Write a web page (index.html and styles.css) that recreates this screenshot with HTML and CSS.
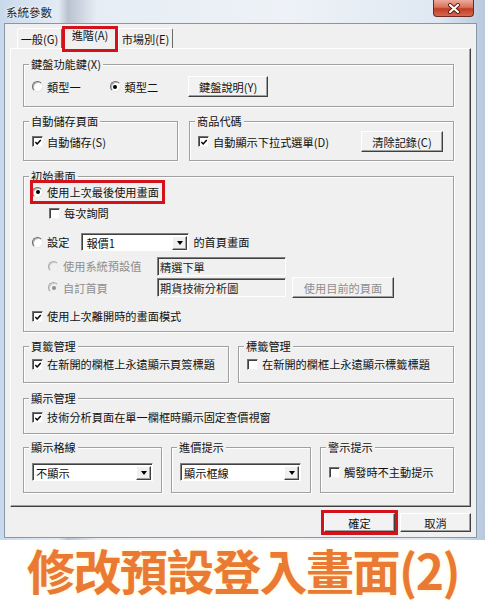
FILE: index.html
```html
<!DOCTYPE html>
<html lang="zh-Hant">
<head>
<meta charset="utf-8">
<title>系統參數</title>
<link rel="stylesheet" href="styles.css">
</head>
<body>
<div class="screen">
  <div class="window">
    <div class="titlebar">
      <span class="title">系統參數</span>
      <span class="close">
        <svg width="14" height="11" viewBox="0 0 14 11">
          <path d="M3 2 L11 9 M11 2 L3 9" stroke="#5a1a10" stroke-width="4" stroke-linecap="round"/>
          <path d="M3 2 L11 9 M11 2 L3 9" stroke="#fff" stroke-width="2.2" stroke-linecap="round"/>
        </svg>
      </span>
    </div>
    <div class="client">
      <div class="tabs">
        <div class="tab t1">一般(G)</div>
        <div class="tab sel hl">進階(A)</div>
        <div class="tab t3">市場別(E)</div>
      </div>
      <div class="panel">
        <div class="group g-key">
          <div class="legend">鍵盤功能鍵(X)</div>
          <div class="row r-key">
            <span class="opt"><span class="radio"></span>類型一</span>
            <span class="opt opt2"><span class="radio on"></span>類型二</span>
            <span class="btn btn-key">鍵盤說明(Y)</span>
          </div>
        </div>

        <div class="pair pair-save">
          <div class="group g-save">
            <div class="legend">自動儲存頁面</div>
            <div class="row r-save">
              <span class="opt"><span class="check on"><svg viewBox="0 0 9 9"><polyline points="1.5,4 3.6,6.2 7.6,1.8" fill="none" stroke="#000" stroke-width="1.7"/></svg></span>自動儲存(S)</span>
            </div>
          </div>
          <div class="group g-code">
            <div class="legend">商品代碼</div>
            <div class="row r-save">
              <span class="opt"><span class="check on"><svg viewBox="0 0 9 9"><polyline points="1.5,4 3.6,6.2 7.6,1.8" fill="none" stroke="#000" stroke-width="1.7"/></svg></span>自動顯示下拉式選單(D)</span>
              <span class="btn btn-clear">清除記錄(C)</span>
            </div>
          </div>
        </div>

        <div class="group g-init">
          <div class="legend">初始畫面</div>
          <div class="row r1 hl"><span class="opt"><span class="radio on"></span>使用上次最後使用畫面</span></div>
          <div class="row r2"><span class="opt"><span class="check"></span>每次詢問</span></div>
          <div class="row r3">
            <span class="opt"><span class="radio"></span>設定</span>
            <span class="select sel-home"><span class="sel-text">報價1</span><span class="arrow"></span></span>
            <span class="after-sel">的首頁畫面</span>
          </div>
          <div class="row r4">
            <span class="opt sub dis"><span class="radio"></span>使用系統預設值</span>
            <span class="textbox">精選下單</span>
          </div>
          <div class="row r5">
            <span class="opt sub dis"><span class="radio on"></span>自訂首頁</span>
            <span class="textbox">期貨技術分析圖</span>
            <span class="btn btn-cur dis">使用目前的頁面</span>
          </div>
          <div class="row r6">
            <span class="opt"><span class="check on"><svg viewBox="0 0 9 9"><polyline points="1.5,4 3.6,6.2 7.6,1.8" fill="none" stroke="#000" stroke-width="1.7"/></svg></span>使用上次離開時的畫面模式</span>
          </div>
        </div>

        <div class="pair pair-tab">
          <div class="group g-page">
            <div class="legend">頁籤管理</div>
            <div class="row r-one">
              <span class="opt"><span class="check on"><svg viewBox="0 0 9 9"><polyline points="1.5,4 3.6,6.2 7.6,1.8" fill="none" stroke="#000" stroke-width="1.7"/></svg></span>在新開的欄框上永遠顯示頁簽標題</span>
            </div>
          </div>
          <div class="group g-label">
            <div class="legend">標籤管理</div>
            <div class="row r-one">
              <span class="opt"><span class="check"></span>在新開的欄框上永遠顯示標籤標題</span>
            </div>
          </div>
        </div>

        <div class="group g-disp">
          <div class="legend">顯示管理</div>
          <div class="row r-disp">
            <span class="opt"><span class="check on"><svg viewBox="0 0 9 9"><polyline points="1.5,4 3.6,6.2 7.6,1.8" fill="none" stroke="#000" stroke-width="1.7"/></svg></span>技術分析頁面在單一欄框時顯示固定查價視窗</span>
          </div>
        </div>

        <div class="pair pair-three">
          <div class="group g-grid">
            <div class="legend">顯示格線</div>
            <div class="row r-last">
              <span class="select sel-wide"><span class="sel-text">不顯示</span><span class="arrow"></span></span>
            </div>
          </div>
          <div class="group g-price">
            <div class="legend">進價提示</div>
            <div class="row r-last">
              <span class="select sel-wide"><span class="sel-text">顯示框線</span><span class="arrow"></span></span>
            </div>
          </div>
          <div class="group g-alert">
            <div class="legend">警示提示</div>
            <div class="row r-last">
              <span class="opt"><span class="check"></span>觸發時不主動提示</span>
            </div>
          </div>
        </div>
      </div>
      <div class="footer">
        <span class="btn btn-foot hl ok">確定</span>
        <span class="btn btn-foot">取消</span>
      </div>
    </div>
  </div>
  <div class="caption">修改預設登入畫面(2)</div>
</div>
</body>
</html>
```

FILE: styles.css
```css
* { box-sizing: border-box; }

body {
  margin: 0;
  background: #fff;
  font-family: "Noto Sans CJK TC", "Noto Sans", sans-serif;
  font-size: 11.2px;
  line-height: 14px;
  color: #111;
}

.screen {
  width: 485px;
  background: #fff;
}

.window {
  height: 540px;
  padding: 0 8px 2px 4px;
  display: flex;
  flex-direction: column;
  background: linear-gradient(90deg, #c9d9ec 0%, #e3ebf4 12%, #b9c3cf 14%, #e6edf5 20%, #eef2f7 60%, #dfe8f2 90%, #b8c9de 100%);
}

.titlebar {
  height: 23px;
  flex: none;
  display: flex;
  justify-content: space-between;
  align-items: flex-start;
  padding-left: 2px;
}

.title {
  line-height: 24px;
  font-size: 11.5px;
  color: #1a1a1a;
  text-shadow: 0 0 4px #fff, 0 0 2px #fff;
}

.close {
  width: 41px;
  height: 17px;
  margin-right: 3px;
  border: 1px solid #6e2a1f;
  border-top: 0;
  border-radius: 0 0 4px 4px;
  background: linear-gradient(#ecaa9b 0%, #d9725c 45%, #c23c22 55%, #d46a4f 100%);
  display: flex;
  align-items: center;
  justify-content: center;
}

.client {
  height: 515px;
  flex: none;
  border: 1px solid #8797aa;
  background: #f0f0f0;
  padding: 2px 5px 0 5px;
}

/* tabs */
.tabs {
  display: flex;
  align-items: flex-end;
  height: 22px;
  padding-left: 7px;
}

.tab {
  height: 20px;
  border: 1px solid;
  border-bottom: 0;
  border-color: #fff #6a6a6a transparent #fff;
  border-radius: 2px 2px 0 0;
  text-align: center;
  padding-top: 2px;
  line-height: 16px;
  background: #f0f0f0;
}

.t1 { width: 45px; }
.t3 { width: 55px; }

.tab.sel {
  width: 56px;
  height: 23px;
  margin-bottom: -1px;
  padding-top: 0;
  z-index: 1;
}

/* red annotation boxes */
.hl { position: relative; }
.hl::after {
  content: "";
  position: absolute;
  border: 3px solid #d3121c;
  pointer-events: none;
}
.tab.hl::after { left: -1px; right: -1px; top: -1px; bottom: -3px; }
.r1.hl::after { left: -2px; right: -2px; top: -2px; bottom: -2px; }
.ok.hl::after { left: -4px; right: -4px; top: -4px; bottom: -4px; }

.panel {
  width: 461px;
  height: 459px;
  border: 1px solid;
  border-color: #fff #404040 #404040 #fff;
  box-shadow: inset -1px -1px 0 #a0a0a0;
  padding: 15px 0 0 12px;
  display: flex;
  flex-direction: column;
  gap: 14px;
}

/* group boxes */
.group {
  border: 1px solid #a0a0a0;
  box-shadow: inset 1px 1px 0 #fff, 1px 1px 0 #fff;
  padding: 0 10px 0 8px;
  flex: none;
}

.legend {
  width: max-content;
  margin: -8px 0 0 -3px;
  padding: 0 2px;
  background: #f0f0f0;
  line-height: 14px;
}

.row {
  display: flex;
  align-items: center;
  height: 20px;
  white-space: nowrap;
}

.pair { display: flex; flex: none; }

.g-key { width: 431px; height: 43px; }
.r-key { margin-top: 5px; height: 21px; }
.opt2 { margin-left: 29px; }
.btn-key { width: 80px; height: 21px; margin-left: 30px; }

.pair-save { gap: 11px; }
.g-save { width: 155px; height: 40px; }
.g-code { width: 265px; height: 40px; }
.r-save { margin-top: 3px; height: 21px; }
.btn-clear { width: 82px; height: 21px; margin-left: auto; }

.g-init { width: 431px; height: 156px; margin-top: 1px; }
.r1 { margin-top: -1px; width: max-content; padding-right: 4px; }
.r2 { margin-top: 1px; padding-left: 17px; }
.r3 { margin-top: 9px; }
.r4 { margin-top: 4px; padding-left: 16px; }
.r5 { margin-top: 1px; padding-left: 16px; height: 21px; }
.r6 { margin-top: 8px; }

.sel-home { width: 108px; margin-left: 12px; }
.after-sel { margin-left: 4px; }
.sub { width: 109px; }
.btn-cur { width: 102px; height: 21px; margin-left: 6px; }

.pair-tab { gap: 9px; }
.g-page { width: 206px; height: 37px; }
.g-label { width: 216px; height: 37px; }
.r-one { margin-top: 1px; }

.g-disp { width: 431px; height: 36px; margin-top: 1px; }
.r-disp { margin-top: 2px; }

.pair-three { gap: 9px; margin-top: -1px; }
.g-grid { width: 139px; height: 46px; }
.g-price { width: 140px; height: 46px; }
.g-alert { width: 134px; height: 46px; }
.r-last { margin-top: 9px; height: 18px; }
.sel-wide { width: 121px; }

/* controls */
.opt {
  display: flex;
  align-items: center;
  gap: 4px;
}

.radio {
  width: 11px;
  height: 11px;
  flex: none;
  border-radius: 50%;
  border: 1px solid;
  border-color: #6a6a6a #e6e6e6 #e6e6e6 #6a6a6a;
  background: #fff;
  box-shadow: inset 1px 1px 0 #b8b8b8;
  display: flex;
  align-items: center;
  justify-content: center;
}
.radio.on::after {
  content: "";
  width: 4px;
  height: 4px;
  border-radius: 50%;
  background: #000;
}

.check {
  width: 11px;
  height: 11px;
  flex: none;
  border: 1px solid;
  border-color: #707070 #f4f4f4 #f4f4f4 #707070;
  box-shadow: inset 1px 1px 0 #404040;
  background: #fff;
  padding: 1px 0 0 1px;
  display: flex;
}
.check svg { width: 9px; height: 9px; }

.dis { color: #8e8e8e; }
.dis .radio {
  border-color: #a8a8a8 #eeeeee #eeeeee #a8a8a8;
  box-shadow: inset 1px 1px 0 #d0d0d0;
  background: #f0f0f0;
}
.dis .radio.on::after { background: #8e8e8e; }

.btn {
  display: flex;
  align-items: center;
  justify-content: center;
  background: #f2f2f2;
  border: 1px solid;
  border-color: #fff #404040 #404040 #fff;
  box-shadow: inset -1px -1px 0 #a0a0a0;
  flex: none;
}

.select {
  height: 18px;
  display: flex;
  align-items: center;
  justify-content: space-between;
  border: 1px solid;
  border-color: #808080 #fff #fff #808080;
  box-shadow: inset 1px 1px 0 #404040;
  background: #fff;
  padding: 1px 1px 0 4px;
  flex: none;
}
.sel-wide { padding-left: 3px; }

.arrow {
  width: 15px;
  height: 14px;
  background: #f0f0f0;
  border: 1px solid;
  border-color: #fff #404040 #404040 #fff;
  box-shadow: inset -1px -1px 0 #a0a0a0;
  display: flex;
  align-items: center;
  justify-content: center;
}
.arrow::after {
  content: "";
  border-left: 3.5px solid transparent;
  border-right: 3.5px solid transparent;
  border-top: 4px solid #000;
}

.textbox {
  width: 129px;
  height: 19px;
  border: 1px solid;
  border-color: #808080 #fff #fff #808080;
  box-shadow: inset 1px 1px 0 #404040;
  background: #f0f0f0;
  padding: 1px 0 0 2px;
  line-height: 16px;
  color: #222;
  flex: none;
}

.footer {
  display: flex;
  justify-content: flex-end;
  gap: 5px;
  margin-top: 6px;
  padding-right: 0;
}
.btn-foot { width: 71px; height: 19px; }

.caption {
  height: 60px;
  padding-left: 27px;
  font-size: 48px;
  line-height: 58px;
  font-weight: 700;
  letter-spacing: -1.5px;
  color: #ea7a33;
  text-shadow: 0 0 3px #fff4cf, 0 0 6px #fff8e0;
  white-space: nowrap;
}
```
